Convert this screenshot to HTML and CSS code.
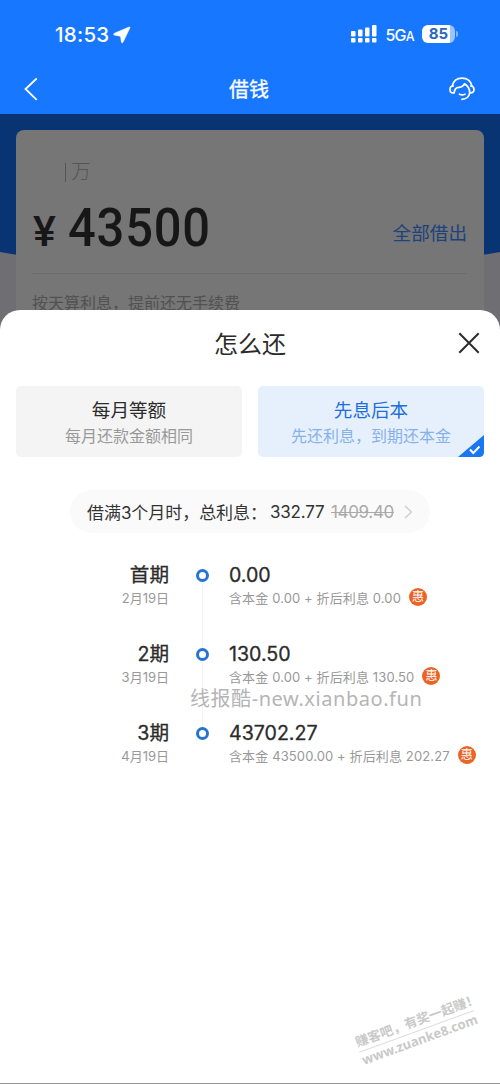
FILE: index.html
```html
<!DOCTYPE html>
<html lang="zh-CN">
<head>
<meta charset="utf-8">
<title>借钱</title>
<link rel="stylesheet" href="styles.css">
</head>
<body>
<div class="app">
  <header class="header">
    <div class="status">
      <div class="status-left">
        <span class="clock">18:53</span>
        <svg class="location" width="18" height="18" viewBox="0 0 18 18"><path d="M16.2 1.1 L1.2 7.4 Q-.2 8.3 1.4 9 L7.6 10.2 L8.5 16.2 Q9.1 17.8 9.9 16.3 L16.9 1.8 Q17.2 .8 16.2 1.1Z" fill="#fff" stroke="#fff" stroke-width=".7"/></svg>
      </div>
      <div class="status-right">
        <svg class="signal" width="27" height="19" viewBox="0 0 27 19" fill="#fff"><rect x="0" y="6" width="4.5" height="5.5" rx="1"/><rect x="7" y="4.5" width="4.5" height="7" rx="1"/><rect x="14" y="2.5" width="4.5" height="9" rx="1"/><rect x="21" y="0" width="4.5" height="11.5" rx="1"/><rect x="0" y="13" width="4.5" height="4.5" rx="1"/><rect x="7" y="13" width="4.5" height="4.5" rx="1"/><rect x="14" y="13" width="4.5" height="4.5" rx="1"/><rect x="21" y="13" width="4.5" height="4.5" rx="1"/></svg>
        <span class="network">5G<small>A</small></span>
        <span class="battery">85</span><i class="battery-tip"></i>
      </div>
    </div>
    <nav class="nav">
      <svg width="26" height="26" viewBox="0 0 26 26" fill="none" stroke="#fff" stroke-width="1.8"><path d="M18.7 2.5 L7.5 13 L18.7 23.8"/></svg>
      <h1 class="nav-title">借钱</h1>
      <svg width="26" height="26" viewBox="0 0 26 26" fill="none" stroke="#fff" stroke-width="1.7" stroke-linecap="round" stroke-linejoin="round"><path d="M3.2 10.2 C4.3 5 8.2 2.2 13 2.2 S21.8 5 23 10.2"/><path d="M5 16.7 Q1 17.5 1 13.5 Q1 10 4.2 10 M21.8 10 Q25 10.2 25 13.5 Q25 17.2 21 16.8"/><path d="M5.2 16.8 C5.5 13 7 11.4 9.8 11.3 C12.7 11.4 14.8 9.5 15.6 7.7 C17.8 9.2 20.8 12.7 20.7 16.5 C20.3 20.5 17.2 23.2 12.9 23.3"/><path d="M10.5 18.2 Q13.2 19.5 16 18.2"/></svg>
    </nav>
  </header>

  <main class="loan">
    <svg class="loan-backdrop" viewBox="0 0 500 210" width="500" height="210"><path d="M0 0 H500 V138 Q250 182 0 138Z" fill="#083474"/></svg>
    <section class="card">
      <div class="unit"><i class="cursor"></i>万</div>
      <div class="amount-row">
        <div class="amount"><span class="yen">¥</span><span class="figure">43500</span></div>
        <span class="borrow-all">全部借出</span>
      </div>
      <p class="card-note">按天算利息，提前还无手续费</p>
    </section>
  </main>

  <section class="sheet">
    <div class="sheet-head">
      <h2>怎么还</h2>
      <svg class="close" width="22" height="22" viewBox="0 0 22 22" fill="none" stroke="#2b2b2b" stroke-width="2"><path d="M1.3 1.3 L20.7 20.7 M20.7 1.3 L1.3 20.7"/></svg>
    </div>
    <div class="options">
      <div class="option">
        <b>每月等额</b><span>每月还款金额相同</span>
      </div>
      <div class="option selected">
        <b>先息后本</b><span>先还利息，到期还本金</span>
        <svg class="tick" width="26" height="22" viewBox="0 0 26 22"><path d="M0 22 L26 0 V17 Q26 22 21 22Z" fill="#1877f2"/><path d="M12 14.5 L15.3 18 L21.5 11.5" fill="none" stroke="#fff" stroke-width="2"/></svg>
      </div>
    </div>
    <div class="summary">
      <span class="summary-label">借满3个月时，总利息：</span><span class="summary-value">332.77</span><s>1409.40</s>
      <svg width="9" height="14" viewBox="0 0 9 14" fill="none" stroke="#ccc" stroke-width="1.3"><path d="M1 1 L7.5 7 L1 13"/></svg>
    </div>
    <div class="schedule">
      <div class="period">
        <div class="when"><b>首期</b><span>2月19日</span></div>
        <i class="dot"></i>
        <div class="due"><b>0.00</b><p>含本金 0.00 + 折后利息 0.00<em>惠</em></p></div>
      </div>
      <div class="period">
        <div class="when"><b>2期</b><span>3月19日</span></div>
        <i class="dot"></i>
        <div class="due"><b>130.50</b><p>含本金 0.00 + 折后利息 130.50<em>惠</em></p></div>
      </div>
      <div class="period">
        <div class="when"><b>3期</b><span>4月19日</span></div>
        <i class="dot"></i>
        <div class="due"><b>43702.27</b><p>含本金 43500.00 + 折后利息 202.27<em>惠</em></p></div>
      </div>
      <div class="site-mark">线报酷-new.xianbao.fun</div>
    </div>
  </section>
  <div class="forum-mark"><div class="forum-slogan">赚客吧，有奖一起赚！</div><div class="forum-url">www.zuanke8.com</div></div>
</div>
</body>
</html>
```
FILE: styles.css
```css
* { box-sizing: border-box; }
body { margin: 0; font-family: Inter, "Noto Sans CJK SC", sans-serif; color: #2b2b2b; }
h1, h2, p { margin: 0; font-weight: 400; }
i, em { font-style: normal; }
svg { display: block; flex: none; }
.app { position: relative; width: 500px; height: 1084px; overflow: hidden; background: #6f6f73; display: flex; flex-direction: column; border-bottom: 1px solid #999; }

.header { flex: none; height: 114px; background: #1877ff; color: #fff; }
.status { height: 62px; padding: 10px 42px 0 55px; display: flex; justify-content: space-between; align-items: center; }
.status-left, .status-right { display: flex; align-items: center; }
.clock { font-size: 20.5px; font-weight: 500; line-height: 24px; letter-spacing: .25px; margin-top: -3px; }
.location { margin: -3px 0 0 4px; }
.signal { margin-top: -3px; }
.network { margin: -1px 0 0 7px; font: 500 16px/20px Inter, sans-serif; letter-spacing: -.7px; }
.network small { font-size: 12.5px; }
.battery { margin: -5px 0 0 8px; width: 33px; height: 18px; border-radius: 6px; background: linear-gradient(90deg, #fff 84%, #9cc5ff 84%); color: #2c67bb; font-size: 15px; line-height: 18px; font-weight: 700; text-align: center; }
.battery-tip { width: 2px; height: 6px; margin: -5px 0 0 1px; border-radius: 0 2px 2px 0; background: #82b6ff; }
.nav { height: 52px; padding: 1px 25px 0 18px; display: flex; align-items: center; justify-content: space-between; }
.nav-title { font-size: 20px; line-height: 30px; -webkit-text-stroke: .3px #fff; padding: 2px 0 0 5px; }

.loan { flex: none; position: relative; height: 196px; padding: 16px 16px 0; }
.loan-backdrop { position: absolute; left: 0; top: 0; }
.card { position: relative; height: 200px; padding: 27px 17px 0 16px; border-radius: 8px; background: #767676; color: #555; }
.unit { display: flex; align-items: center; gap: 5px; height: 30px; padding-left: 33px; font-size: 20px; font-weight: 300; line-height: 30px; }
.cursor { width: 1px; height: 19px; background: #555; }
.amount-row { height: 87px; display: flex; justify-content: space-between; border-bottom: 1px solid #6c6c6c; }
.amount { color: #171717; display: flex; font-family: Roboto, sans-serif; font-weight: 500; }
.yen { font-size: 43px; line-height: 88px; width: 36px; transform: translateX(1px); }
.figure { font-size: 54px; line-height: 81px; letter-spacing: .9px; transform: scaleX(.905); transform-origin: left; margin-right: -20px; }
.borrow-all { font-size: 18.6px; line-height: 93px; color: #20427b; }
.card-note { padding-top: 17px; font-size: 16px; line-height: 24px; color: #515151; }

.sheet { flex: 1; position: relative; background: #fff; border-radius: 20px 20px 0 0; padding: 0 16px; }
.sheet-head { position: relative; height: 76px; padding-top: 17px; text-align: center; }
.sheet-head h2 { font-size: 24px; line-height: 36px; }
.close { position: absolute; right: 4px; top: 22px; }
.options { display: grid; grid-template-columns: 1fr 1fr; gap: 16px; }
.option { position: relative; height: 71px; padding-top: 11px; border-radius: 5px; background: #f4f4f4; text-align: center; }
.option b { display: block; font-size: 18.6px; line-height: 27px; font-weight: 400; }
.option span { display: block; font-size: 16px; line-height: 24px; color: #999; }
.selected { background: #e6f0fd; }
.selected b { color: #1f6edb; }
.selected span { color: #86b1eb; }
.tick { position: absolute; right: 0; bottom: 0; }
.summary { width: 360px; height: 43px; margin: 33px auto 0 54px; padding-left: 17px; border-radius: 22px; background: #fafafa; display: flex; align-items: center; white-space: nowrap; font-size: 17px; color: #333; }
.summary-label { width: 183px; letter-spacing: -.05px; }
.summary-value { width: 61px; letter-spacing: -.2px; }
.summary s { width: 73px; color: #aaa; letter-spacing: -.35px; }

.schedule { position: relative; padding-top: 26px; }
.schedule::before { content: ""; position: absolute; left: 186px; top: 52px; width: 1px; height: 150px; background: #f3f3f3; }
.period { position: relative; height: 79px; display: grid; grid-template-columns: 153px 66px 1fr; }
.when { text-align: right; }
.when b, .due b { display: block; height: 30px; font-size: 19.6px; line-height: 32px; font-weight: 400; -webkit-text-stroke: .3px #2b2b2b; }
.when span { display: block; font-size: 13px; line-height: 20px; color: #999; margin-top: -1px; letter-spacing: 0; }
.dot { width: 13px; height: 13px; margin: 10px 0 0 27px; border: 3px solid #2673d5; border-radius: 50%; background: #fff; }
.due { margin-left: -6px; white-space: nowrap; }
.due p { display: flex; align-items: center; font-size: 13px; line-height: 20px; letter-spacing: .12px; color: #999; margin-top: -1px; }
.due em { width: 18px; height: 18px; margin: -2px 0 0 8px; border-radius: 50%; background: #eb6425; color: #fff; font-size: 12px; line-height: 17px; letter-spacing: 0; text-align: center; }
.site-mark { position: absolute; left: 174px; top: 152px; font: 20px/28px "Noto Sans", "Noto Sans CJK SC", sans-serif; letter-spacing: .55px; color: #b5b5b5; white-space: nowrap; }
.forum-mark { position: absolute; left: 355px; top: 1011px; width: 122px; transform: rotate(-20deg); color: #c9c9c9; font-family: "Noto Sans", "Noto Sans CJK SC", sans-serif; font-weight: 700; white-space: nowrap; }
.forum-slogan { font-size: 13px; line-height: 20px; border-bottom: 1px solid #ddd; }
.forum-url { font-size: 13px; line-height: 16px; }
```
